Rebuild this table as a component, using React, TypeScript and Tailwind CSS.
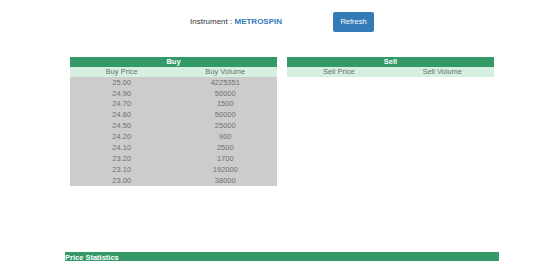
import React from 'react';

const buyRows: [string, string][] = [
  ['25.00', '4225351'],
  ['24.90', '50000'],
  ['24.70', '1500'],
  ['24.60', '50000'],
  ['24.50', '25000'],
  ['24.20', '900'],
  ['24.10', '2500'],
  ['23.20', '1700'],
  ['23.10', '192000'],
  ['23.00', '38000'],
];

function BookTable({ title, cols, rows }: { title: string; cols: [string, string]; rows: [string, string][] }) {
  return (
    <div className="w-[207px] text-[7.5px] leading-none">
      <div className="h-[10px] bg-[#339966] text-white font-bold flex items-center justify-center">{title}</div>
      <div className="h-[10px] bg-[#d5f0e1] text-[#707070] grid grid-cols-2 items-center text-center">
        <span>{cols[0]}</span>
        <span>{cols[1]}</span>
      </div>
      {rows.length > 0 && (
        <div className="bg-[#cccccc] text-[#707070]">
          {rows.map((r) => (
            <div key={r[0]} className="h-[10.9px] grid grid-cols-2 items-center text-center">
              <span>{r[0]}</span>
              <span>{r[1]}</span>
            </div>
          ))}
        </div>
      )}
    </div>
  );
}

export default function App() {
  return (
    <div className="w-[533px] h-[261px] overflow-hidden bg-white font-['Liberation_Sans',Arial,sans-serif]">
      {/* Instrument bar */}
      <div className="flex items-center pt-[12px] pl-[190px]">
        <span className="text-[8px] text-[#333]">
          Instrument : <span className="font-bold text-[#337ab7]">METROSPIN</span>
        </span>
        <button className="ml-[51px] w-[41px] h-[20px] rounded-[2px] bg-[#337ab7] text-white text-[7.5px]">
          Refresh
        </button>
      </div>

      {/* Order book */}
      <div className="flex gap-[10px] pl-[70px] mt-[25px] h-[130px]">
        <BookTable title="Buy" cols={['Buy Price', 'Buy Volume']} rows={buyRows} />
        <BookTable title="Sell" cols={['Sell Price', 'Sell Volume']} rows={[]} />
      </div>

      {/* Price statistics */}
      <div className="mt-[65px] ml-[65px] w-[434px] h-[12px] bg-[#339966] text-white font-bold text-[7.5px] leading-none pt-[2px]">
        Price Statistics
      </div>
    </div>
  );
}
